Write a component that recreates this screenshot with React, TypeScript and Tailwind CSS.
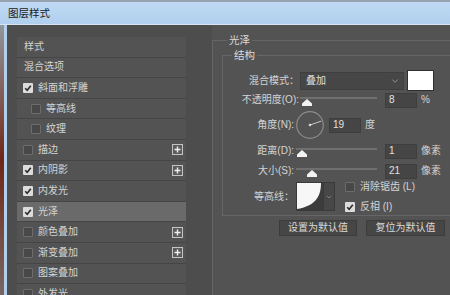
import { ChevronDown } from "lucide-react"

type Row = {
  label: string
  checked?: boolean
  sub?: boolean
  plus?: boolean
  active?: boolean
}

const rows: Row[] = [
  { label: "样式" },
  { label: "混合选项" },
  { label: "斜面和浮雕", checked: true },
  { label: "等高线", checked: false, sub: true },
  { label: "纹理", checked: false, sub: true },
  { label: "描边", checked: false, plus: true },
  { label: "内阴影", checked: true, plus: true },
  { label: "内发光", checked: true },
  { label: "光泽", checked: true, active: true },
  { label: "颜色叠加", checked: false, plus: true },
  { label: "渐变叠加", checked: false, plus: true },
  { label: "图案叠加", checked: false },
  { label: "外发光", checked: false },
]

function CheckBox({ checked }: { checked: boolean }) {
  if (checked) {
    return (
      <span className="flex h-[10px] w-[10px] shrink-0 items-center justify-center rounded-[1px] bg-[#dcdcdc]">
        <svg width="8" height="8" viewBox="0 0 8 8">
          <path d="M1.2 4.2 L3.2 6.2 L6.8 1.8" fill="none" stroke="#2b2b2b" strokeWidth="1.6" />
        </svg>
      </span>
    )
  }
  return <span className="h-[10px] w-[10px] shrink-0 rounded-[1px] border border-[#6c6c6c] bg-[#484848]" />
}

function PlusBox() {
  return (
    <span className="ml-auto mr-[3px] flex h-[11px] w-[11px] items-center justify-center border border-[#c4c4c4] bg-[#5c5c5c]">
      <svg width="7" height="7" viewBox="0 0 7 7">
        <path d="M3.5 0.5 V6.5 M0.5 3.5 H6.5" stroke="#f0f0f0" strokeWidth="1.4" />
      </svg>
    </span>
  )
}

function Thumb() {
  return (
    <svg width="10" height="7" viewBox="0 0 10 7" className="block">
      <path d="M5 0 L10 4.5 V7 H0 V4.5 Z" fill="#f2f2f2" />
    </svg>
  )
}

function Slider({ width, offset }: { width: number; offset: number }) {
  return (
    <div className="flex flex-col" style={{ width }}>
      <div className="h-[2px] w-full bg-[#6f6f6f]" />
      <div style={{ marginLeft: offset }}>
        <Thumb />
      </div>
    </div>
  )
}

function NumBox({ value }: { value: string }) {
  return (
    <div className="flex h-[15px] w-[32px] items-center border border-[#3e3e3e] bg-[#454545] pl-[3px] text-[10px] text-[#e2e2e2]">
      {value}
    </div>
  )
}

export default function App() {
  return (
    <div className="flex h-[295px] w-[450px] flex-col overflow-hidden bg-[#535353] font-['Liberation_Sans','Noto_Sans_CJK_SC',sans-serif] text-[10px] leading-[14px] text-[#d4d4d4]">
      {/* title bar */}
      <div className="flex h-[25px] shrink-0 items-center border-t-2 border-b border-t-[#97a3ae] border-b-[#d7e4f1] bg-linear-to-b from-[#bfd9f3] to-[#b0cfee] pl-[8px] text-[10.5px] text-[#1b1b1b]">
        图层样式
      </div>

      <div className="flex min-h-0 flex-1">
        {/* window frame */}
        <div className="w-[4px] shrink-0 bg-linear-to-b from-[#8f969c] via-[#6e2416] to-[#766662]" />
        <div className="w-[3px] shrink-0 bg-[#b2cfec]" />

        {/* dialog body */}
        <div className="flex min-w-0 flex-1 overflow-hidden bg-[#4d4d4d]">
          {/* style list */}
          <div className="ml-[10px] mt-[12px] w-[169px] shrink-0">
            {rows.map((r) => (
              <div
                key={r.label}
                className={`flex h-[20.6px] items-center border-b border-[#454545] ${
                  r.active ? "bg-[#6a6a6a]" : "bg-[#535353]"
                } ${r.checked === undefined ? "pl-[7px]" : r.sub ? "pl-[14px]" : "pl-[6px]"}`}
              >
                {r.checked !== undefined && <CheckBox checked={r.checked} />}
                <span className={r.checked !== undefined ? "ml-[5px]" : ""}>{r.label}</span>
                {r.plus && <PlusBox />}
              </div>
            ))}
          </div>

          {/* settings panel */}
          <div className="ml-[26px] w-[260px] shrink-0 bg-[#535353] pt-[8px]">
            <fieldset className="h-[300px] border border-[#666666]">
              <legend className="ml-[14px] px-[2px] text-[10.5px] text-[#dcdcdc]">光泽</legend>

              <fieldset className="ml-[9px] mt-[1px] border border-[#666666] pb-[4px]">
                <legend className="ml-[9px] px-[2px] text-[10.5px] text-[#dcdcdc]">结构</legend>

                {/* blend mode */}
                <div className="mt-[8px] flex h-[21px] items-center">
                  <span className="w-[76px] text-right">混合模式：</span>
                  <div className="ml-[1px] flex h-[18px] w-[104px] items-center justify-between border border-[#3f3f3f] bg-[#464646] pl-[5px] pr-[3px] text-[#e0e0e0]">
                    叠加
                    <ChevronDown size={10} strokeWidth={1.5} color="#bdbdbd" />
                  </div>
                  <div className="ml-[3px] h-[21px] w-[27px] border border-[#2f2f2f] bg-white" />
                </div>

                {/* opacity */}
                <div className="mt-[0px] flex h-[18px] items-center">
                  <span className="w-[76px] text-right">不透明度(O):</span>
                  <div className="ml-[1px] pt-[3px]">
                    <Slider width={77} offset={2} />
                  </div>
                  <div className="ml-[8px]">
                    <NumBox value="8" />
                  </div>
                  <span className="ml-[4px]">%</span>
                </div>

                {/* angle */}
                <div className="mt-[2px] flex h-[28px] items-center">
                  <span className="w-[71px] text-right">角度(N):</span>
                  <div className="ml-[2px] h-[28px] w-[28px] shrink-0">
                    <svg width="28" height="28" viewBox="0 0 28 28">
                      <circle cx="14" cy="14" r="13.3" fill="none" stroke="#8c8c8c" strokeWidth="1.2" />
                      <line x1="14" y1="14" x2="25.3" y2="10.1" stroke="#c8c8c8" strokeWidth="1" />
                      <circle cx="14" cy="14" r="1.3" fill="#d8d8d8" />
                    </svg>
                  </div>
                  <div className="ml-[5px]">
                    <NumBox value="19" />
                  </div>
                  <span className="ml-[4px]">度</span>
                </div>

                {/* distance */}
                <div className="mt-[3px] flex h-[18px] items-center">
                  <span className="w-[71px] text-right">距离(D):</span>
                  <div className="ml-[2px] pt-[3px]">
                    <Slider width={81} offset={1} />
                  </div>
                  <div className="ml-[8px]">
                    <NumBox value="1" />
                  </div>
                  <span className="ml-[4px]">像素</span>
                </div>

                {/* size */}
                <div className="mt-[2px] flex h-[18px] items-center">
                  <span className="w-[71px] text-right">大小(S):</span>
                  <div className="ml-[2px] pt-[3px]">
                    <Slider width={81} offset={11} />
                  </div>
                  <div className="ml-[8px]">
                    <NumBox value="21" />
                  </div>
                  <span className="ml-[4px]">像素</span>
                </div>

                {/* contour */}
                <div className="mt-[2px] flex h-[29px] items-center">
                  <span className="w-[71px] text-right">等高线：</span>
                  <div className="ml-[2px] flex h-[29px] border border-[#3a3a3a]">
                    <svg width="26" height="27" viewBox="0 0 26 27" className="block bg-[#3c3c3c]">
                      <path d="M0 0 H24 C24 15 17 23 0 26 Z" fill="#f7f7f7" />
                    </svg>
                    <div className="flex w-[11px] items-center justify-center border-l border-[#3a3a3a] bg-[#474747]">
                      <ChevronDown size={8} strokeWidth={1.6} color="#a8a8a8" />
                    </div>
                  </div>
                  <div className="ml-[10px] flex flex-col gap-[6px]">
                    <div className="flex items-center">
                      <CheckBox checked={false} />
                      <span className="ml-[5px]">消除锯齿 (L)</span>
                    </div>
                    <div className="flex items-center">
                      <CheckBox checked={true} />
                      <span className="ml-[5px]">反相 (I)</span>
                    </div>
                  </div>
                </div>
              </fieldset>

              {/* buttons */}
              <div className="ml-[66px] mt-[4px] flex gap-[9px]">
                <div className="flex h-[16px] w-[78px] items-center justify-center border border-[#3c3c3c] bg-[#464646] text-[#dadada]">
                  设置为默认值
                </div>
                <div className="flex h-[16px] w-[79px] items-center justify-center border border-[#3c3c3c] bg-[#464646] text-[#dadada]">
                  复位为默认值
                </div>
              </div>
            </fieldset>
          </div>
        </div>
      </div>
    </div>
  )
}
